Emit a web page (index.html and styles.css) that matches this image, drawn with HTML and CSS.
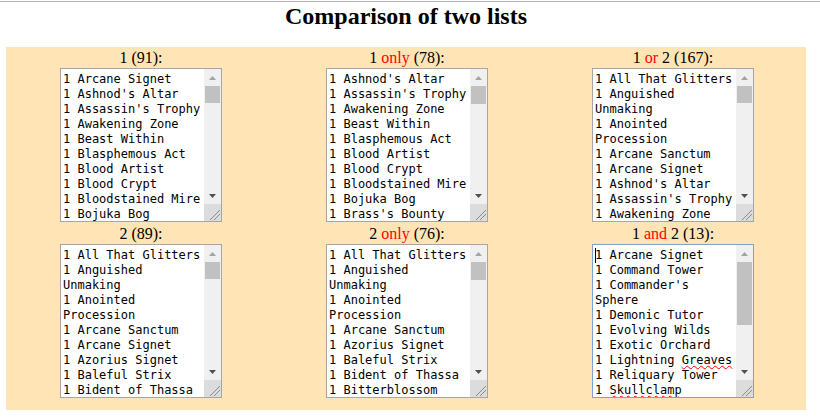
FILE: index.html
```html
<!DOCTYPE html>
<html lang="en">
<head>
  <meta charset="UTF-8">
  <title>Comparison of two lists</title>
  <link rel="stylesheet" href="styles.css">
</head>
<body>

  <div class="topline"></div>
  <h2 class="title">Comparison of two lists</h2>

  <div class="panel">
    <div class="grid">

      <div class="cell">
        <div class="label">1 (91):</div>
        <div class="listbox">
          <div class="lines">1 Arcane Signet
1 Ashnod's Altar
1 Assassin's Trophy
1 Awakening Zone
1 Beast Within
1 Blasphemous Act
1 Blood Artist
1 Blood Crypt
1 Bloodstained Mire
1 Bojuka Bog</div>
          <div class="scrollbar">
            <div class="sb-btn"><svg width="7" height="4"><polygon points="0,4 3.5,0 7,4" fill="#a3a3a3"/></svg></div>
            <div class="sb-track"><div class="thumb" style="height:17px"></div></div>
            <div class="sb-btn"><svg width="7" height="4"><polygon points="0,0 7,0 3.5,4" fill="#505050"/></svg></div>
            <div class="sb-corner"><svg width="17" height="17"><path d="M6 16 L16 6 M10 16 L16 10" stroke="#8a8a8a" stroke-width="1"/></svg></div>
          </div>
        </div>
      </div>

      <div class="cell">
        <div class="label">1 <span class="op">only</span> (78):</div>
        <div class="listbox">
          <div class="lines">1 Ashnod's Altar
1 Assassin's Trophy
1 Awakening Zone
1 Beast Within
1 Blasphemous Act
1 Blood Artist
1 Blood Crypt
1 Bloodstained Mire
1 Bojuka Bog
1 Brass's Bounty</div>
          <div class="scrollbar">
            <div class="sb-btn"><svg width="7" height="4"><polygon points="0,4 3.5,0 7,4" fill="#a3a3a3"/></svg></div>
            <div class="sb-track"><div class="thumb" style="height:18px"></div></div>
            <div class="sb-btn"><svg width="7" height="4"><polygon points="0,0 7,0 3.5,4" fill="#505050"/></svg></div>
            <div class="sb-corner"><svg width="17" height="17"><path d="M6 16 L16 6 M10 16 L16 10" stroke="#8a8a8a" stroke-width="1"/></svg></div>
          </div>
        </div>
      </div>

      <div class="cell">
        <div class="label">1 <span class="op">or</span> 2 (167):</div>
        <div class="listbox">
          <div class="lines">1 All That Glitters
1 Anguished Unmaking
1 Anointed Procession
1 Arcane Sanctum
1 Arcane Signet
1 Ashnod's Altar
1 Assassin's Trophy
1 Awakening Zone</div>
          <div class="scrollbar">
            <div class="sb-btn"><svg width="7" height="4"><polygon points="0,4 3.5,0 7,4" fill="#a3a3a3"/></svg></div>
            <div class="sb-track"><div class="thumb" style="height:17px"></div></div>
            <div class="sb-btn"><svg width="7" height="4"><polygon points="0,0 7,0 3.5,4" fill="#505050"/></svg></div>
            <div class="sb-corner"><svg width="17" height="17"><path d="M6 16 L16 6 M10 16 L16 10" stroke="#8a8a8a" stroke-width="1"/></svg></div>
          </div>
        </div>
      </div>

      <div class="cell">
        <div class="label">2 (89):</div>
        <div class="listbox">
          <div class="lines">1 All That Glitters
1 Anguished Unmaking
1 Anointed Procession
1 Arcane Sanctum
1 Arcane Signet
1 Azorius Signet
1 Baleful Strix
1 Bident of Thassa</div>
          <div class="scrollbar">
            <div class="sb-btn"><svg width="7" height="4"><polygon points="0,4 3.5,0 7,4" fill="#a3a3a3"/></svg></div>
            <div class="sb-track"><div class="thumb" style="height:17px"></div></div>
            <div class="sb-btn"><svg width="7" height="4"><polygon points="0,0 7,0 3.5,4" fill="#505050"/></svg></div>
            <div class="sb-corner"><svg width="17" height="17"><path d="M6 16 L16 6 M10 16 L16 10" stroke="#8a8a8a" stroke-width="1"/></svg></div>
          </div>
        </div>
      </div>

      <div class="cell">
        <div class="label">2 <span class="op">only</span> (76):</div>
        <div class="listbox">
          <div class="lines">1 All That Glitters
1 Anguished Unmaking
1 Anointed Procession
1 Arcane Sanctum
1 Azorius Signet
1 Baleful Strix
1 Bident of Thassa
1 Bitterblossom</div>
          <div class="scrollbar">
            <div class="sb-btn"><svg width="7" height="4"><polygon points="0,4 3.5,0 7,4" fill="#a3a3a3"/></svg></div>
            <div class="sb-track"><div class="thumb" style="height:18px"></div></div>
            <div class="sb-btn"><svg width="7" height="4"><polygon points="0,0 7,0 3.5,4" fill="#505050"/></svg></div>
            <div class="sb-corner"><svg width="17" height="17"><path d="M6 16 L16 6 M10 16 L16 10" stroke="#8a8a8a" stroke-width="1"/></svg></div>
          </div>
        </div>
      </div>

      <div class="cell">
        <div class="label">1 <span class="op">and</span> 2 (13):</div>
        <div class="listbox focused">
          <div class="lines"><span class="caret"></span>1 Arcane Signet
1 Command Tower
1 Commander's Sphere
1 Demonic Tutor
1 Evolving Wilds
1 Exotic Orchard
1 Lightning <span class="misspelt">Greaves</span>
1 Reliquary Tower
1 <span class="misspelt">Skullclamp</span></div>
          <div class="scrollbar">
            <div class="sb-btn"><svg width="7" height="4"><polygon points="0,4 3.5,0 7,4" fill="#a3a3a3"/></svg></div>
            <div class="sb-track"><div class="thumb" style="height:63px"></div></div>
            <div class="sb-btn"><svg width="7" height="4"><polygon points="0,0 7,0 3.5,4" fill="#505050"/></svg></div>
            <div class="sb-corner"><svg width="17" height="17"><path d="M6 16 L16 6 M10 16 L16 10" stroke="#8a8a8a" stroke-width="1"/></svg></div>
          </div>
        </div>
      </div>

    </div>
  </div>

</body>
</html>
```

FILE: styles.css
```css
body {
  margin: 0;
  background: #fff;
  font-family: 'Liberation Serif', serif;
  color: #000;
}

.topline {
  height: 1px;
  margin-top: 1px;
  background: #b4b4b4;
}

.title {
  width: 800px;
  margin: 0 0 17px 6px;
  font-size: 24px;
  line-height: 28px;
  font-weight: bold;
  text-align: center;
}

.panel {
  width: 798px;
  margin-left: 6px;
  padding: 0 0 12px 2px;
  background: #ffe4b5;
}

.grid {
  display: grid;
  grid-template-columns: repeat(3, 266px);
  row-gap: 1px;
}

.cell {
  display: flex;
  flex-direction: column;
  align-items: center;
}

.label {
  height: 21px;
  line-height: 21px;
  font-size: 16px;
}

.op {
  color: #ff0000;
}

.listbox {
  display: flex;
  box-sizing: border-box;
  width: 162px;
  height: 154px;
  border: 1px solid #a6a6a6;
  background: #fff;
}

.listbox.focused {
  border-color: #7ea2d8;
}

.lines {
  flex: 1;
  padding: 3px 2px 1px;
  overflow: hidden;
  white-space: pre-wrap;
  font-family: 'DejaVu Sans Mono', monospace;
  font-size: 12px;
  line-height: 15px;
  color: #000;
}

.caret {
  display: inline-block;
  width: 0;
  height: 15px;
  margin-right: -1px;
  border-left: 1px solid #000;
  vertical-align: top;
}

.misspelt {
  display: inline-block;
  height: 15px;
  vertical-align: top;
  text-decoration: underline wavy #ff0000;
  text-decoration-thickness: 1px;
}

.scrollbar {
  width: 17px;
  display: flex;
  flex-direction: column;
  background: #f0f0f0;
}

.sb-btn {
  height: 17px;
  display: flex;
  align-items: center;
  justify-content: center;
}

.sb-track {
  flex: 1;
}

.thumb {
  margin: 0 1px;
  background: #c1c1c1;
}

.sb-corner {
  height: 17px;
  background: #dcdcdc;
}

.sb-corner svg {
  display: block;
}
```
